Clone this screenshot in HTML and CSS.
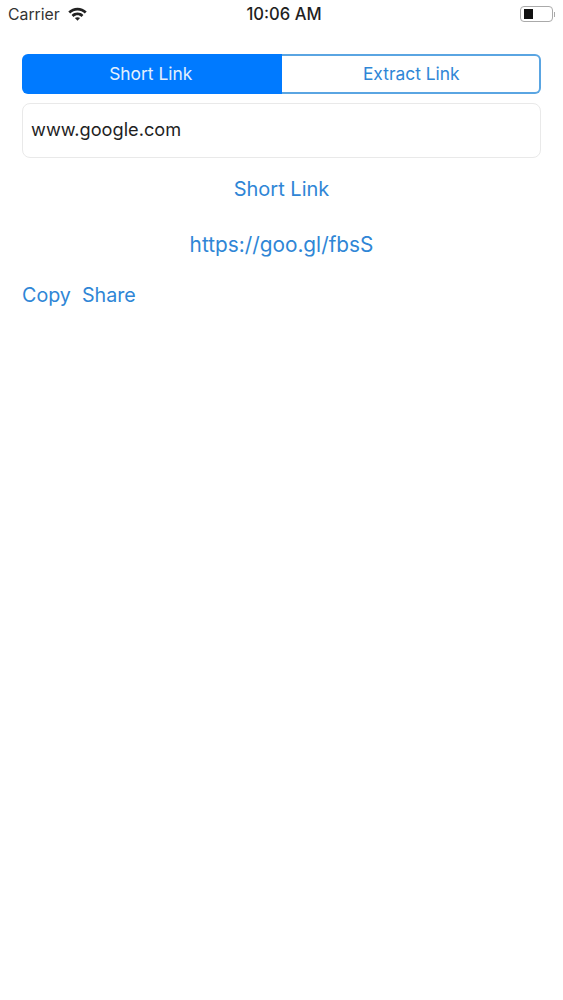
FILE: index.html
```html
<!DOCTYPE html>
<html lang="en">
<head>
    <meta charset="UTF-8">
    <title>Short Link</title>
    <link rel="stylesheet" href="styles.css">
</head>
<body>
    <div class="status-bar">
        <div class="status-left">
            <span class="carrier">Carrier</span>
            <svg class="wifi" width="19" height="14" viewBox="0 0 19 14">
                <path d="M0.3 4.6 C5.2 -0.6 13.8 -0.6 18.7 4.6 L16.8 6.6 C12.8 2.5 6.2 2.5 2.2 6.6 Z" fill="#222"/>
                <path d="M3.6 7.9 C6.8 4.7 12.2 4.7 15.4 7.9 L13.5 9.9 C11.2 7.8 7.8 7.8 5.5 9.9 Z" fill="#222"/>
                <path d="M6.9 11.1 C8.4 9.9 10.6 9.9 12.1 11.1 L9.5 13.8 Z" fill="#222"/>
            </svg>
        </div>
        <div class="status-time">10:06 AM</div>
        <div class="status-right">
            <div class="battery"><div class="battery-level"></div></div>
            <div class="battery-cap"></div>
        </div>
    </div>

    <div class="content">
        <div class="segmented">
            <div class="segment active">Short Link</div>
            <div class="segment">Extract Link</div>
        </div>
        <div class="url-field">www.google.com</div>
        <div class="link-row action-row">Short Link</div>
        <div class="link-row result-row">https://goo.gl/fbsS</div>
        <div class="buttons-row">
            <span>Copy</span>
            <span>Share</span>
        </div>
    </div>
</body>
</html>
```

FILE: styles.css
```css
body {
    margin: 0;
    background-color: #fff;
    font-family: "Inter", "Liberation Sans", sans-serif;
    color: #1f1f1f;
}

.status-bar {
    display: flex;
    align-items: center;
    justify-content: space-between;
    height: 28px;
    padding: 0 8px;
}

.status-left {
    display: flex;
    align-items: center;
    gap: 8px;
    width: 155px;
}

.carrier {
    font-size: 15.8px;
    color: #333;
}

.status-time {
    font-size: 16.6px;
    font-weight: 500;
}

.status-right {
    display: flex;
    align-items: center;
    justify-content: flex-end;
    width: 150px;
}

.battery {
    box-sizing: border-box;
    width: 33px;
    height: 16px;
    padding: 2px;
    border: 1px solid #aaa;
    border-radius: 4px;
}

.battery-level {
    width: 9px;
    height: 10px;
    margin-left: 1px;
    background-color: #111;
}

.battery-cap {
    width: 1px;
    height: 5px;
    margin-left: 1px;
    background-color: #aaa;
}

.content {
    padding: 26px 22px 0;
}

.segmented {
    display: flex;
    height: 40px;
}

.segment {
    width: 50%;
    box-sizing: border-box;
    display: flex;
    align-items: center;
    justify-content: center;
    padding: 0 0 2px 2px;
    border: 2px solid #5aa5e2;
    border-left: 0;
    border-radius: 0 6px 6px 0;
    font-size: 17.4px;
    color: #2f86d6;
}

.segment.active {
    padding: 0 2px 2px 0;
    border: 0;
    border-radius: 6px 0 0 6px;
    background-color: #007aff;
    color: #e3f0fd;
}

.url-field {
    box-sizing: border-box;
    height: 55px;
    margin-top: 9px;
    padding: 0 8px 4px;
    display: flex;
    align-items: center;
    border: 1px solid #e9e9e9;
    border-radius: 8px;
    font-size: 18.2px;
}

.link-row {
    text-align: center;
    font-size: 20px;
    line-height: 24px;
    color: #2f86d6;
}

.action-row {
    margin-top: 19px;
}

.result-row {
    margin-top: 32px;
    font-size: 20.8px;
}

.buttons-row {
    display: flex;
    gap: 11px;
    margin-top: 26px;
    font-size: 19.7px;
    line-height: 24px;
    color: #2f86d6;
}
```
